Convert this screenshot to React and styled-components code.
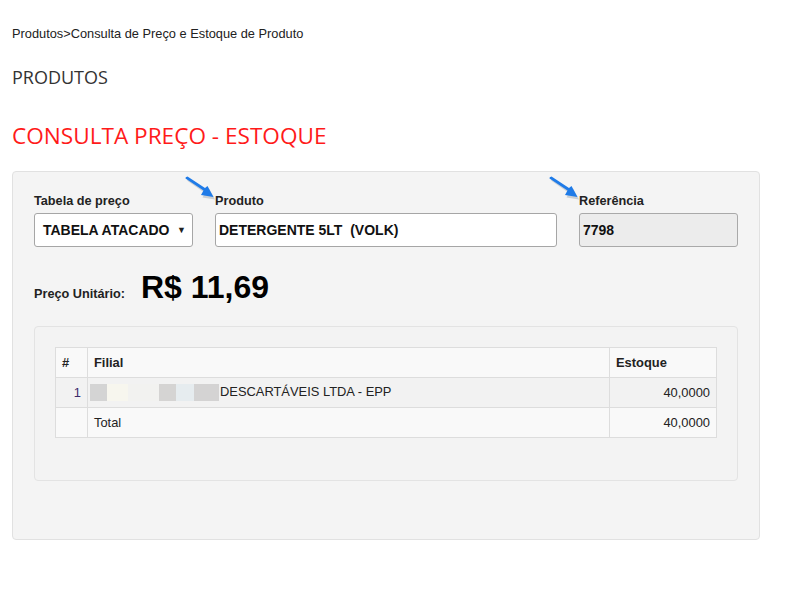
import React from 'react';
import styled, { createGlobalStyle } from 'styled-components';

const GlobalStyle = createGlobalStyle`
  body {
    margin: 0;
    background: #fff;
    font-family: "Liberation Sans", Arial, sans-serif;
    color: #333;
  }
`;

const Page = styled.div`
  padding: 27px 12px 0 12px;
  width: 748px;
`;

const Breadcrumb = styled.div`
  font-size: 12.8px;
  line-height: 14px;
  color: #222;
`;

const SectionTitle = styled.h2`
  margin: 24px 0 0 0;
  font-family: "Open Sans", sans-serif;
  font-weight: 400;
  font-size: 18px;
  line-height: 24px;
  color: #333;
`;

const PageTitle = styled.h1`
  margin: 31px 0 0 0;
  font-family: "Open Sans", sans-serif;
  font-weight: 400;
  font-size: 22.6px;
  line-height: 32px;
  color: #ff1a1a;
`;

const Panel = styled.div`
  margin-top: 19px;
  background: #f4f4f4;
  border: 1px solid #e1e1e1;
  border-radius: 4px;
  padding: 19px 21px 58px 21px;
`;

const FormRow = styled.div`
  display: grid;
  grid-template-columns: 159px 1fr 159px;
  gap: 22px;
`;

const Field = styled.div`
  display: flex;
  flex-direction: column;
`;

const LabelWrap = styled.div`
  position: relative;
  height: 14px;
  margin-bottom: 8px;
`;

const Label = styled.label`
  font-size: 12.7px;
  font-weight: 700;
  line-height: 14px;
  color: #222;
`;

const Pointer = styled.svg`
  position: absolute;
  left: -32px;
  top: -15px;
`;

const Box = styled.div`
  height: 32px;
  border: 1px solid ${(p) => (p.disabled ? '#a9a9a9' : '#a6a6a6')};
  background: ${(p) => (p.disabled ? '#ececec' : '#fff')};
  border-radius: 3px;
  display: flex;
  align-items: center;
  justify-content: space-between;
  padding: 0 ${(p) => (p.select ? '6px' : '3px')} 0 ${(p) => (p.select ? '8px' : '3px')};
  font-size: 14px;
  font-weight: 700;
  color: #111;
  white-space: pre;
`;

const Caret = styled.span`
  font-size: 9px;
  color: #222;
`;

const PriceRow = styled.div`
  display: flex;
  align-items: baseline;
  margin-top: 22px;
  gap: 16px;
`;

const PriceLabel = styled.span`
  font-size: 12.7px;
  font-weight: 700;
  color: #222;
`;

const PriceValue = styled.span`
  font-size: 32px;
  font-weight: 700;
  color: #000;
  line-height: 36px;
`;

const InnerPanel = styled.div`
  margin-top: 21px;
  background: #f3f3f3;
  border: 1px solid #e3e3e3;
  border-radius: 4px;
  padding: 20px 20px 42px 20px;
`;

const Table = styled.table`
  width: 100%;
  border-collapse: collapse;
  font-size: 12.9px;
  color: #222;
`;

const Th = styled.th`
  height: 29px;
  border: 1px solid #dddddd;
  background: #f9f9f9;
  text-align: left;
  padding: 0 6px;
  font-weight: 700;
  width: ${(p) => p.w || 'auto'};
`;

const Tr = styled.tr`
  background: ${(p) => (p.odd ? '#f2f2f2' : '#f9f9f9')};
`;

const Td = styled.td`
  height: 29px;
  border: 1px solid #dddddd;
  padding: 0 6px;
  text-align: ${(p) => p.align || 'left'};
  color: ${(p) => p.color || '#222'};
`;

const Blurred = styled.span`
  display: inline-flex;
  vertical-align: middle;
  margin-left: -4px;
  margin-right: 1px;
`;

const BlurChip = styled.span`
  display: inline-block;
  width: ${(p) => p.w}px;
  height: 17px;
  background: ${(p) => p.c};
`;

const Arrow = () => (
  <Pointer width="36" height="26" viewBox="0 0 36 26">
    <path d="M3 3 L21 15.5 L18.5 20 L31 22 L25 11 L22.5 13 L5 1.5 Z" fill="#8d98a6" opacity="0.4" transform="translate(1,1.5)" />
    <path d="M2.5 2.5 L20.5 14.5 L18 19 L30.5 21 L24.5 10 L22 12 L4.5 0.5 Q2 0.8 2.5 2.5 Z" fill="#1f7be8" />
  </Pointer>
);

const chips = [
  { w: 17, c: '#d4d4d4' },
  { w: 21, c: '#f7f6ee' },
  { w: 31, c: '#f2f2f0' },
  { w: 17, c: '#d5d4d3' },
  { w: 18, c: '#e6ecef' },
  { w: 25, c: '#d4d3d3' },
];

const App = () => {
  return (
    <Page>
      <GlobalStyle />
      <Breadcrumb>Produtos&gt;Consulta de Preço e Estoque de Produto</Breadcrumb>
      <SectionTitle>PRODUTOS</SectionTitle>
      <PageTitle>CONSULTA PREÇO - ESTOQUE</PageTitle>
      <Panel>
        <FormRow>
          <Field>
            <LabelWrap>
              <Label>Tabela de preço</Label>
            </LabelWrap>
            <Box select>
              TABELA ATACADO
              <Caret>▼</Caret>
            </Box>
          </Field>
          <Field>
            <LabelWrap>
              <Arrow />
              <Label>Produto</Label>
            </LabelWrap>
            <Box>DETERGENTE 5LT  (VOLK)</Box>
          </Field>
          <Field>
            <LabelWrap>
              <Arrow />
              <Label>Referência</Label>
            </LabelWrap>
            <Box disabled>7798</Box>
          </Field>
        </FormRow>
        <PriceRow>
          <PriceLabel>Preço Unitário:</PriceLabel>
          <PriceValue>R$ 11,69</PriceValue>
        </PriceRow>
        <InnerPanel>
          <Table>
            <thead>
              <tr>
                <Th w="19px">#</Th>
                <Th>Filial</Th>
                <Th w="94px">Estoque</Th>
              </tr>
            </thead>
            <tbody>
              <Tr odd>
                <Td align="right" color="#3b2a6b">1</Td>
                <Td>
                  <Blurred>
                    {chips.map((ch, i) => (
                      <BlurChip key={i} w={ch.w} c={ch.c} />
                    ))}
                  </Blurred>
                  DESCARTÁVEIS LTDA - EPP
                </Td>
                <Td align="right">40,0000</Td>
              </Tr>
              <Tr>
                <Td />
                <Td>Total</Td>
                <Td align="right">40,0000</Td>
              </Tr>
            </tbody>
          </Table>
        </InnerPanel>
      </Panel>
    </Page>
  );
};

export default App;
